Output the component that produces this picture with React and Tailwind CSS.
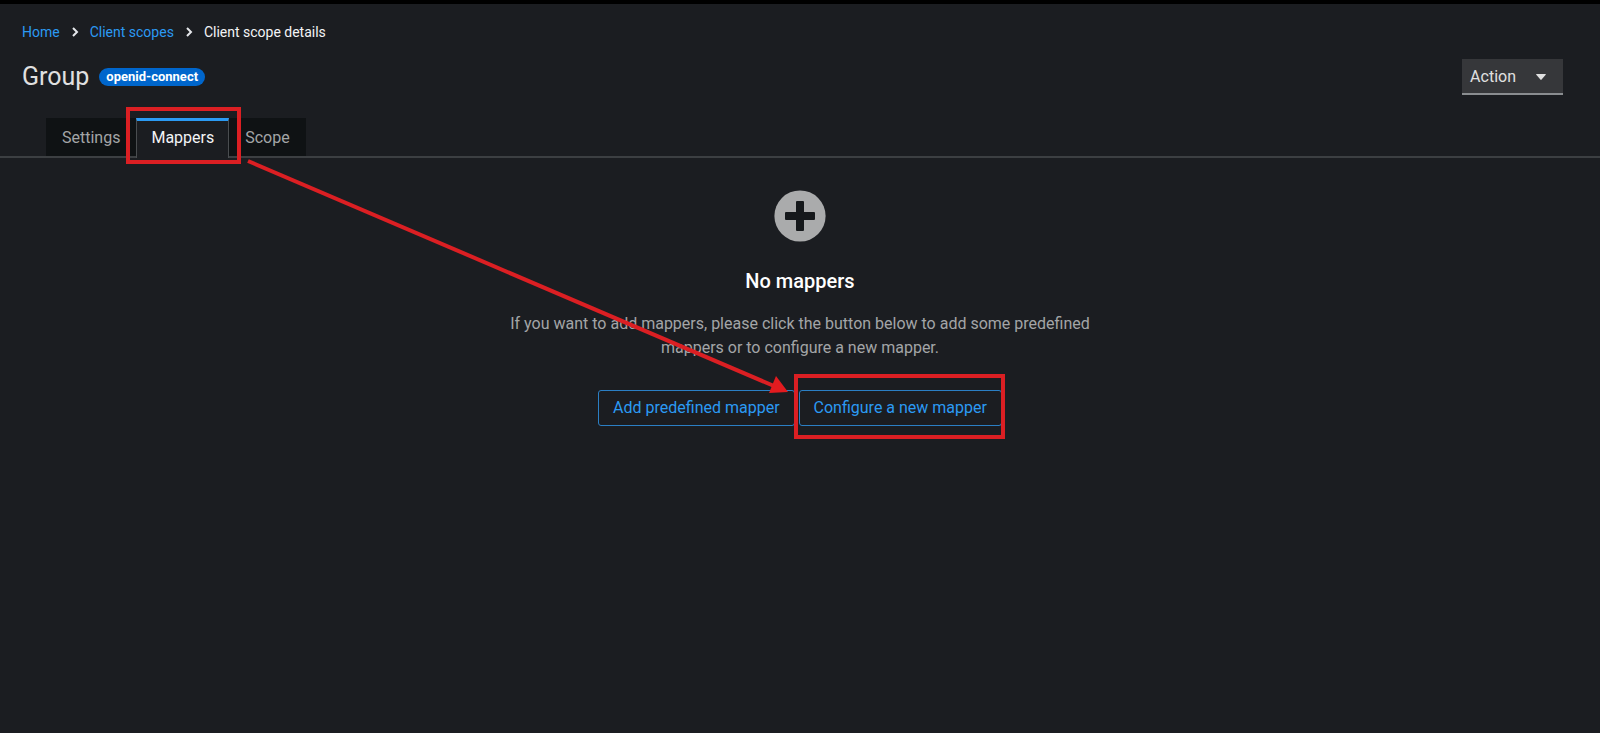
import React, { useState } from 'react';

const tabs = ['Settings', 'Mappers', 'Scope'];

const Chevron = () => (
  <svg viewBox="0 0 8 10" className="w-2 h-3 text-gray-200" fill="none" stroke="currentColor" strokeWidth="2" aria-hidden="true">
    <path d="M2 1l4 4-4 4" />
  </svg>
);

const Breadcrumb = () => (
  <nav aria-label="Breadcrumb" className="pt-[18px] px-[22px]">
    <ol className="flex items-center gap-[11px] text-sm text-[#2b9af3]">
      <li><a href="#home">Home</a></li>
      <li><Chevron /></li>
      <li><a href="#client-scopes">Client scopes</a></li>
      <li><Chevron /></li>
      <li className="text-gray-100" aria-current="page">Client scope details</li>
    </ol>
  </nav>
);

const Header = () => (
  <header className="flex items-center justify-between mt-[17px] pl-[22px] pr-[37px]">
    <div className="flex items-center gap-[10px]">
      <h1 className="text-[25px] leading-9 text-[#e0e0e0]">Group</h1>
      <span className="px-[7px] rounded-full bg-[#0066cc] text-[13px] leading-[18px] font-bold text-white">openid-connect</span>
    </div>
    <button
      type="button"
      aria-haspopup="menu"
      className="flex items-center gap-5 h-9 pt-[2px] pl-2 pr-[17px] bg-[#36373a] border-b-2 border-[#8a8d90] text-[#e0e0e0]"
    >
      Action
      <svg viewBox="0 0 10 6" className="w-[10px] h-[6px]" fill="currentColor" aria-hidden="true">
        <path d="M0.6 0h8.8q0.8 0 0.3 0.7L5.6 5.6q-0.6 0.6-1.2 0L0.3 0.7Q-0.2 0 0.6 0z" />
      </svg>
    </button>
  </header>
);

const Tabs = ({ active, onChange }) => (
  <div role="tablist" className="flex mt-[23px] pl-[46px] border-b-2 border-[#3c3f42]">
    {tabs.map(tab => (
      <div key={tab} className="relative -mb-[2px]">
        <button
          type="button"
          role="tab"
          aria-selected={tab === active}
          onClick={() => onChange(tab)}
          className={`h-[40px] ${
            tab === active
              ? 'px-[14px] bg-[#1b1d21] text-gray-100 border-t-[3px] border-x border-t-[#2b9af3] border-x-[#4a4d50] pb-[3px]'
              : 'px-4 pt-[2px] bg-[#0f1214] text-[#a3a5a7] border-b-2 border-[#3c3f42]'
          }`}
        >
          {tab}
        </button>
        {tab === 'Mappers' && (
          <span className="absolute -top-[11px] -bottom-[6px] -left-[10px] -right-[12px] z-10 border-4 border-[#db1f23] pointer-events-none" />
        )}
      </div>
    ))}
  </div>
);

const EmptyState = () => (
  <section className="flex flex-col items-center pt-8 text-center">
    <svg viewBox="0 0 52 52" className="w-[52px] h-[52px]" aria-hidden="true">
      <circle cx="26" cy="26" r="25.6" fill="#aaabac" />
      <path
        d="M23 11h6q1 0 1 1v10h10q1 0 1 1v6q0 1-1 1H30v10q0 1-1 1h-6q-1 0-1-1V30H12q-1 0-1-1v-6q0-1 1-1h10V12q0-1 1-1z"
        fill="#15181b"
      />
    </svg>
    <h2 className="mt-6 text-xl leading-[30px] font-medium text-white">No mappers</h2>
    <p className="mt-4 max-w-[600px] leading-6 text-[#a3a5a7]">
      If you want to add mappers, please click the button below to add some predefined mappers or to configure a new mapper.
    </p>
    <div className="flex gap-1 mt-[30px] text-[#2b9af3]">
      <button type="button" className="h-9 px-[14px] border border-[#2b7fc4] rounded-[3px]">Add predefined mapper</button>
      <div className="relative">
        <button type="button" className="h-9 px-[14px] border border-[#2b7fc4] rounded-[3px]">Configure a new mapper</button>
        <span className="absolute -top-4 -bottom-[13px] -left-[5px] -right-[3px] border-4 border-[#db1f23] pointer-events-none" />
      </div>
    </div>
  </section>
);

const App = () => {
  const [active, setActive] = useState('Mappers');

  return (
    <main className="relative min-h-screen bg-[#1b1d21] border-t-4 border-black font-['Roboto',sans-serif] text-base">
      <Breadcrumb />
      <Header />
      <Tabs active={active} onChange={setActive} />
      <EmptyState />
      {/* arrow from the Mappers tab to the configure button */}
      <svg viewBox="0 0 544 240" className="absolute left-[246px] top-[151px] w-[544px] h-[240px] pointer-events-none" aria-hidden="true">
        <path d="M2 6L528 231" stroke="#db1f23" strokeWidth="4" fill="none" />
        <path d="M530 221L542 237L523 238z" fill="#e31b1f" />
      </svg>
    </main>
  );
};

export default App;
